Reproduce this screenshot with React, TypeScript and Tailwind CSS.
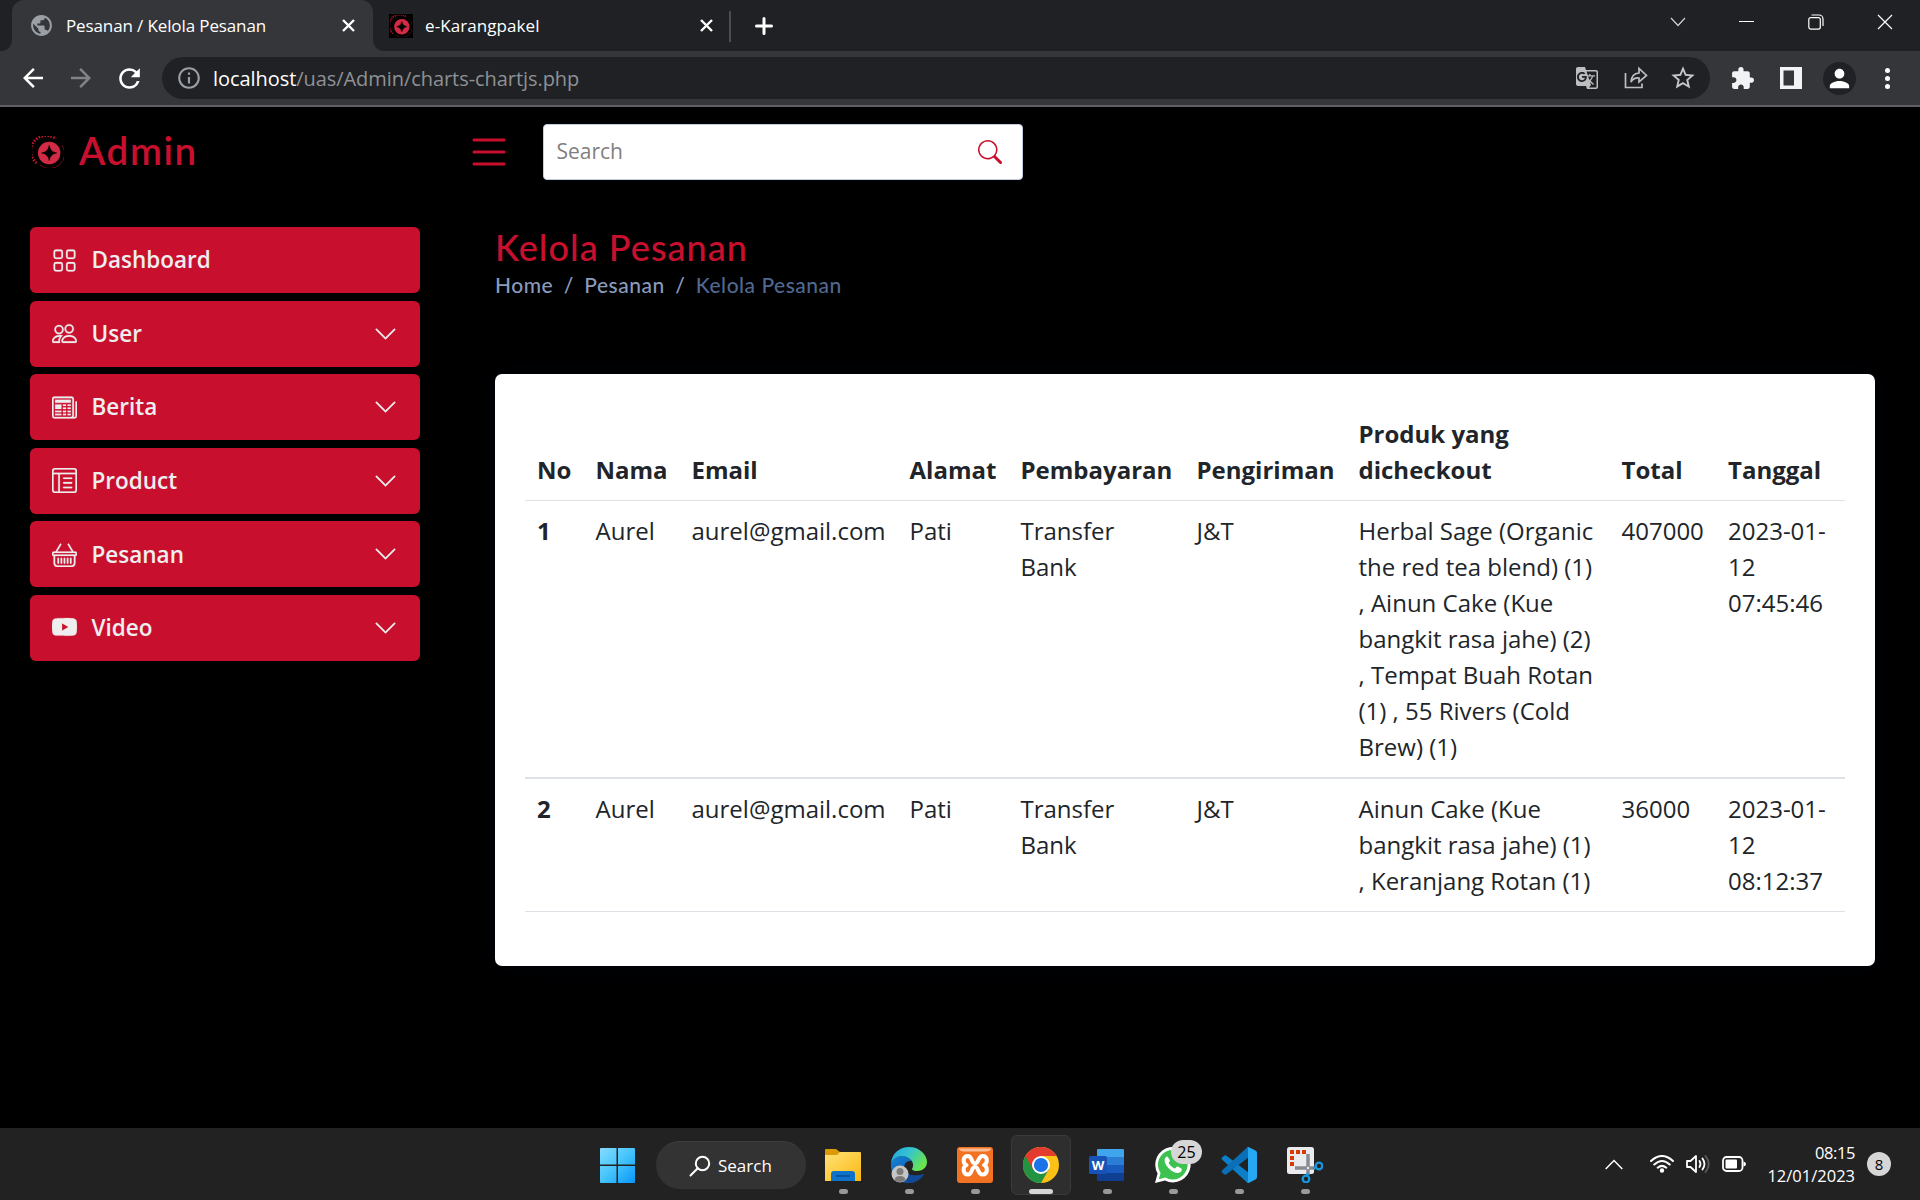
import React from 'react';
import {
  BsGrid, BsPeople, BsNewspaper, BsLayoutTextWindowReverse, BsBasket, BsYoutube,
  BsChevronDown, BsList, BsSearch,
} from 'react-icons/bs';
import {
  MdPublic, MdArrowBack, MdArrowForward, MdRefresh, MdInfoOutline, MdGTranslate,
  MdStarOutline, MdExtension, MdPerson,
} from 'react-icons/md';

const UI = "font-['Open_Sans','Noto_Sans',sans-serif]";

function BrandMark({ size }: { size: number }) {
  return (
    <svg width={size} height={size} viewBox="0 0 32 32" className="shrink-0">
      <path d="M30 9A15 15 0 0 1 8 29" fill="none" stroke="#7a1222" strokeWidth=".8" />
      <path d="M4.500 27A14.500 14.500 0 0 1 24 3" fill="none" stroke="#c0192f" strokeWidth="2.800" strokeDasharray="1.500 1.500" />
      <circle cx="17.200" cy="17" r="11.200" fill="#d22b45" />
      <path d="M17.200 9.500Q18.200 16 24.700 17Q18.200 18 17.200 24.500Q16.200 18 9.700 17Q16.200 16 17.200 9.500Z" fill="#000" stroke="#000" strokeWidth=".6" />
    </svg>
  );
}

function Cross({ size, w, color = '#fff' }: { size: number; w: number; color?: string }) {
  return (
    <svg width={size} height={size} viewBox={`0 0 ${size} ${size}`} fill="none" stroke={color} strokeWidth={w}>
      <path d={`M1 1L${size - 1} ${size - 1}M${size - 1} 1L1 ${size - 1}`} />
    </svg>
  );
}

function TabStrip() {
  return (
    <div className="flex h-[51px] bg-[#202124]">
      <div className="flex h-[51px] w-3 bg-[#35363a]"><div className="w-3 rounded-br-[11px] bg-[#202124]" /></div>
      <div className="flex h-[51px] w-[361px] bg-[#202124]">
        <div className="flex w-full items-center rounded-t-[12px] bg-[#35363a] px-[18px]">
          <MdPublic className="size-[25px] -ml-px mr-3 text-[#9aa0a6]" />
          <span className="text-[17px] tracking-[-0.12px] text-white">Pesanan / Kelola Pesanan</span>
          <span className="ml-auto"><Cross size={13} w={2.4} /></span>
        </div>
      </div>
      <div className="flex h-[51px] w-4 bg-[#35363a]"><div className="w-4 rounded-bl-[11px] bg-[#202124]" /></div>
      <div className="flex w-[342px] items-center border-r border-transparent pr-[17px]">
        <div className="flex size-6 items-center justify-center bg-black"><BrandMark size={22} /></div>
        <span className="ml-3 text-[17px] tracking-[0.080px] text-white">e-Karangpakel</span>
        <span className="ml-auto"><Cross size={13} w={2.4} /></span>
      </div>
      <div className="-ml-[2px] mt-[11px] h-[31px] w-[2px] bg-[#4b4c4f]" />
      <svg width="18" height="18" className="ml-[23.500px] mt-[17px]" stroke="#fff" strokeWidth="3" strokeLinecap="round"><path d="M9 1.500V16.500M1.500 9H16.500" /></svg>
      <div className="ml-auto flex h-[43px] items-center text-white">
        <svg width="16" height="10" className="mr-[53px]" fill="none" stroke="#d0d0d0" strokeWidth="1.200"><path d="M1 1L8 8.500L15 1" /></svg>
        <div className="mr-[54px] h-px w-[15px] bg-white" />
        <svg width="16" height="16" className="mr-[53px]" fill="none" stroke="#fff" strokeWidth="1.200"><rect x=".8" y="3.600" width="11.500" height="11.500" rx="2" /><path d="M3.500 1H11a4 4 0 0 1 4 4v7" /></svg>
        <span className="mr-[27px]"><Cross size={16} w={1.200} /></span>
      </div>
    </div>
  );
}

function Toolbar() {
  return (
    <div className="flex h-14 items-center border-b-2 border-[#5f6063] bg-[#35363a]">
      <MdArrowBack className="ml-[18px] size-[30px] text-white" />
      <MdArrowForward className="ml-[18px] size-[30px] text-[#828387]" />
      <MdRefresh className="ml-[18px] size-[31px] text-white" />
      <div className="ml-[17px] flex h-[42px] w-[1548px] items-center rounded-full bg-[#202124] pl-[14px] pr-[13px]">
        <MdInfoOutline className="size-[26px] text-[#9aa0a6]" />
        <span className="ml-[11px] pt-[2px] text-[20px] tracking-[-0.060px] text-white">localhost<span className="text-[#8e9195]">/uas/Admin/charts-chartjs.php</span></span>
        <MdGTranslate className="ml-auto size-[24px] text-[#bdbec0]" />
        <svg width="24" height="24" viewBox="0 0 24 24" className="ml-[25px]" fill="none" stroke="#bdbec0" strokeWidth="1.700"><path d="M1.500 7V21.500H18V17.500M7 16Q7.500 7.500 15 7V2.500L22.500 9.500L15 16V12Q9.500 11.500 7 16Z" /></svg>
        <MdStarOutline className="ml-[21px] size-[28px] text-[#c6c7c9]" />
      </div>
      <MdExtension className="ml-[20px] size-[25px] text-[#f1f3f4]" />
      <svg width="22" height="22" className="ml-[25px]"><path fillRule="evenodd" fill="#f1f3f4" d="M0 0H22V22H0ZM3.500 3.500V18.500H14V3.500Z" /></svg>
      <div className="ml-[21px] flex size-[33px] items-end justify-center overflow-hidden rounded-full bg-[#202124]"><MdPerson className="mb-[2px] size-[29px] text-white" /></div>
      <div className="ml-[29px] flex flex-col gap-[3px]"><i className="size-[5px] rounded-full bg-white" /><i className="size-[5px] rounded-full bg-white" /><i className="size-[5px] rounded-full bg-white" /></div>
    </div>
  );
}

const nav = [
  { label: 'Dashboard', Icon: BsGrid, open: false },
  { label: 'User', Icon: BsPeople, open: true },
  { label: 'Berita', Icon: BsNewspaper, open: true },
  { label: 'Product', Icon: BsLayoutTextWindowReverse, open: true },
  { label: 'Pesanan', Icon: BsBasket, open: true },
  { label: 'Video', Icon: BsYoutube, open: true },
];

function Sidebar() {
  return (
    <aside className="flex w-[450px] flex-col gap-[7.6px] pl-[30px] pr-[30px] pt-[30px]">
      {nav.map(({ label, Icon, open }) => (
        <a key={label} className="flex h-[66px] items-center rounded-[6px] bg-[#c8102e] pl-[22px] pr-[23px] text-[#eee]">
          <Icon className="size-[25px] stroke-[.15]" />
          <span className="ml-[14.5px] text-[22.5px] font-semibold">{label}</span>
          {open && <BsChevronDown className="ml-auto size-6 translate-x-[0.5px] stroke-[.3]" />}
        </a>
      ))}
    </aside>
  );
}

const columns = [
  { name: 'No', w: 'w-[58.500px]' }, { name: 'Nama', w: 'w-[96px]' }, { name: 'Email', w: 'w-[218px]' },
  { name: 'Alamat', w: 'w-[111px]' }, { name: 'Pembayaran', w: 'w-[176px]' }, { name: 'Pengiriman', w: 'w-[162px]' },
  { name: 'Produk yang dicheckout', w: 'w-[263px]' }, { name: 'Total', w: 'w-[106.500px]' }, { name: 'Tanggal', w: 'w-[129px]' },
];
const orders = [
  ['1', 'Aurel', 'aurel@gmail.com', 'Pati', 'Transfer Bank', 'J&T', 'Herbal Sage (Organic the red tea blend) (1) , Ainun Cake (Kue bangkit rasa jahe) (2) , Tempat Buah Rotan (1) , 55 Rivers (Cold Brew) (1)', '407000', '2023-01-12 07:45:46'],
  ['2', 'Aurel', 'aurel@gmail.com', 'Pati', 'Transfer Bank', 'J&T', 'Ainun Cake (Kue bangkit rasa jahe) (1) , Keranjang Rotan (1)', '36000', '2023-01-12 08:12:37'],
];

function Orders() {
  return (
    <div className="mt-[73px] h-[592px] w-[1380px] rounded-[7px] bg-white px-[30px] pt-[29px] shadow-[0_0_30px_#012970]/10">
      <table className="w-[1320px] table-fixed border-collapse text-left text-[24px] leading-[36px] text-[#212529]">
        <thead>
          <tr className="h-[97px] border-b border-[#dee2e6] align-bottom">
            {columns.map((c) => <th key={c.name} className={`${c.w} p-3 font-bold`}>{c.name}</th>)}
          </tr>
        </thead>
        <tbody>
          {orders.map((o, r) => (
            <tr key={o[0]} className={`${r === 0 ? 'h-[278px] border-b-2' : 'h-[133px] border-b'} border-[#dee2e6] align-top`}>
              {o.map((v, i) => <td key={i} className={`py-3 pl-3 ${i === 0 ? 'font-bold' : ''} ${i === 6 || i === 4 ? 'pr-3' : ''}`}>{v}</td>)}
            </tr>
          ))}
        </tbody>
      </table>
    </div>
  );
}

function Page() {
  return (
    <main className="flex h-[1021px] flex-col bg-black">
      <header className="flex h-[90px] items-center">
        <div className="flex w-[443px] items-center pl-[32px] text-[#c8102e]">
          <BrandMark size={32} />
          <span className="-mt-[2px] ml-[15px] font-['Lato',sans-serif] text-[38.500px] font-semibold tracking-[1.6px]">Admin</span>
        </div>
        <BsList className="ml-[22px] size-12 text-[#c8102e]" />
        <div className="ml-[30px] flex h-14 w-[480px] items-center rounded-[4px] border border-[#c5cbe0] bg-white pl-[12.500px] pr-5">
          <span className="text-[21px] text-[#7f7f7f]">Search</span>
          <BsSearch className="ml-auto size-6 text-[#c8102e]" />
        </div>
      </header>
      <div className="flex flex-1">
        <Sidebar />
        <section className="ml-[45px] pt-[29px]">
          <h1 className="h-[43px] whitespace-nowrap font-['Lato',sans-serif] text-[36px] font-medium leading-[43px] tracking-[1.050px] text-[#c8102e]">Kelola Pesanan</h1>
          <nav className="flex h-[32px] items-center gap-[10.500px] font-['Lato',sans-serif] text-[21px] font-medium tracking-[0.500px] text-[#899bbd]">
            <span>Home</span><span>/</span><span>Pesanan</span><span>/</span><span className="text-[#51678f]">Kelola Pesanan</span>
          </nav>
          <Orders />
        </section>
      </div>
    </main>
  );
}

function Explorer() {
  return (
    <svg width="36" height="34" viewBox="0 0 36 34">
      <defs><linearGradient id="folder" x2="1" y2="1"><stop stopColor="#ffe27a" /><stop offset="1" stopColor="#fbb80f" /></linearGradient></defs>
      <path d="M0 2Q0 1 1 1H11L15 4H35V12H0Z" fill="#dd9a08" />
      <path d="M0 7H12L15 4H35Q36 4 36 5V33H0Z" fill="url(#folder)" />
      <path d="M6 33V26Q6 23 9 23H27Q30 23 30 26V33Z" fill="#0e72c8" /><path d="M11 28H25" stroke="#074b91" strokeWidth="1.500" />
    </svg>
  );
}

function Edge() {
  return (
    <svg width="36" height="36" viewBox="0 0 36 36">
      <defs>
        <linearGradient id="edgeTop" x2="1" y2=".5"><stop stopColor="#21a5e0" /><stop offset=".5" stopColor="#35c3d0" /><stop offset="1" stopColor="#68e54e" /></linearGradient>
        <linearGradient id="edgeLow" x2="1" y2="1"><stop stopColor="#1483d8" /><stop offset="1" stopColor="#0c4da0" /></linearGradient>
      </defs>
      <path d="M0 16Q4 9 11 9Q19 9 20 14Q14 13 13 20C13 27 22 31 33 27C29 34 22 36.500 16 36C7 35-1 28 0 16Z" fill="url(#edgeLow)" />
      <path d="M0 16C1 6 9 0 18 0C29 0 36 8 36 15C36 21 31 24 26 24C22 24 20 22.500 21.500 21C24 16 19 9 11 9Q4 9 0 16Z" fill="url(#edgeTop)" />
      <path d="M13 20C13 27 22 31 33 27C29 34 22 36.500 16 36C12 32 10 25 13 20Z" fill="#114a96" />
      <circle cx="9" cy="27" r="8.500" fill="#c8c6c4" /><circle cx="9" cy="24.500" r="3.500" fill="#7d7b79" /><path d="M3.500 33Q4 29 9 29T14.500 33Q9 37 3.500 33Z" fill="#7d7b79" />
    </svg>
  );
}

function Xampp() {
  return (
    <svg width="36" height="36" viewBox="0 0 36 36">
      <rect width="36" height="36" rx="3" fill="#f27222" /><path d="M1.500 1.500H34.500Q33 4.500 29 4.500H7Q3 4.500 1.500 1.500Z" fill="#f9bd95" />
      <path d="M11 9C5.500 9 5.500 16.500 9.500 18C5.500 19.500 5.500 27.500 11 27.500C15.500 27.500 14 20 18 20S20.500 27.500 25.500 27.500C31 27.500 31 19.500 27 18C31 16.500 31 9 25.500 9C21 9 22 16.500 18 16.500S15.500 9 11 9Z" fill="none" stroke="#fff" strokeWidth="4" strokeLinejoin="round" />
    </svg>
  );
}

function Chrome() {
  return (
    <svg width="36" height="36" viewBox="0 0 36 36">
      <circle cx="18" cy="18" r="18" fill="#fbc116" />
      <path d="M18 18L25.800 22.500L18 36A18 18 0 0 1 2.400 9Z" fill="#229342" />
      <path d="M2.400 9A18 18 0 0 1 33.600 9H18L10.200 22.500Z" fill="#e33b2e" />
      <circle cx="18" cy="18" r="9" fill="#fff" /><circle cx="18" cy="18" r="7.100" fill="#1a73e8" />
    </svg>
  );
}

function Word() {
  return (
    <div className="relative">
      <svg width="36" height="32" viewBox="0 0 36 32">
        <path d="M9 0H34Q35 0 35 1V8H8V1Q8 0 9 0Z" fill="#41a5ee" /><path d="M8 8H35V16H8Z" fill="#2b7cd3" /><path d="M8 16H35V24H8Z" fill="#185abd" /><path d="M8 24H35V31Q35 32 34 32H9Q8 32 8 31Z" fill="#103f91" />
        <rect y="7" width="18" height="18" rx="1.500" fill="#1752b8" />
      </svg>
      <span className="absolute left-0 top-[7px] w-[18px] text-center text-[13px] font-bold leading-[18px] text-white">W</span>
    </div>
  );
}

function WhatsApp() {
  return (
    <div className="relative">
      <svg width="36" height="36" viewBox="0 0 36 36">
        <path d="M0 36L2.600 26.500A17.700 17.700 0 1 1 10 33.500Z" fill="#fff" />
        <path d="M3.800 32.200L5.600 26A14.800 14.800 0 1 1 10.500 30.500Z" fill="#3dc250" />
        <path d="M12.500 9.500Q11.500 9 10.500 10.500C8 14 11 18.500 14.500 22C19 26 24 27.500 26.500 24Q27.500 22 26 21.200L22.800 19.600Q21.800 19.200 21 20.500Q20 22 18.500 21Q15.500 19.300 14 16.500Q13.500 15.500 14.500 14.800Q15.300 14 14.800 13Z" fill="#fff" />
      </svg>
      <span className="absolute -top-[7px] left-4 flex h-6 w-[31px] items-center justify-center rounded-full bg-[#d6d6d6] text-[16px] text-black">25</span>
    </div>
  );
}

function VSCode() {
  return (
    <svg width="36" height="36" viewBox="0 0 36 36">
      <path d="M1 12.500Q0 11.500 1 10.500L3.500 8.500Q4.500 8 5.500 8.700L28 26V36Q26.500 36 25 34.500Z" fill="#0d7fc9" />
      <path d="M1 23.500Q0 24.500 1 25.500L3.500 27.500Q4.500 28 5.500 27.300L28 10V0Q26.500 0 25 1.500Z" fill="#0a6fb6" />
      <path d="M26 .5Q27 0 28 .3L34.500 3.500Q36 4.300 36 6V30Q36 31.700 34.500 32.500L28 35.700Q27 36 26 35.500Q27 35 27 33.500V2.500Q27 1 26 .5Z" fill="#27a8f2" />
    </svg>
  );
}

function Snip() {
  return (
    <svg width="36" height="36" viewBox="0 0 36 36">
      <rect width="27" height="27" rx="2.500" fill="#e9ebef" />
      <g fill="#d83b01"><path d="M3 3H7V7H3ZM9 3H13V7H9ZM15 3H19V7H15ZM3 9H7V13H3ZM3 15H7V19H3Z" /></g>
      <path d="M21 7V28M8 21H28" stroke="#888c92" strokeWidth="3.500" /><circle cx="21" cy="21" r="1.200" fill="#eee" />
      <g fill="none" stroke="#1795dd" strokeWidth="2.300"><circle cx="32" cy="19" r="3.300" /><circle cx="19" cy="32" r="3.300" /><path d="M26 21.500L29 20.500M21 26L20 29" /></g>
    </svg>
  );
}

const apps = [Explorer, Edge, Xampp, Chrome, Word, WhatsApp, VSCode, Snip];

function Taskbar() {
  return (
    <footer className="flex h-[72px] bg-[#222222] text-white">
      <div className="flex w-[650px] items-center justify-end pr-[15px] pt-[2px]">
        <svg width="35" height="35" viewBox="0 0 35 35">
          <defs><linearGradient id="win" gradientUnits="userSpaceOnUse" x1="0" y1="0" x2="35" y2="35"><stop stopColor="#84dcff" /><stop offset=".5" stopColor="#45c4fb" /><stop offset="1" stopColor="#0797fb" /></linearGradient></defs>
          <path fill="url(#win)" d="M1 0H16.500V16.500H0V1Q0 0 1 0ZM18 0H34Q35 0 35 1V16.500H18ZM0 18H16.500V35H1Q0 35 0 34ZM18 18H35V34Q35 35 34 35H18Z" />
        </svg>
      </div>
      <div className="ml-[6px] mt-[13px] flex h-12 w-[150px] items-center rounded-full border-t border-[#3e3e3e] bg-[#333333] pl-[33px]">
        <svg width="22" height="22" viewBox="0 0 22 22" fill="none" stroke="#fff" strokeWidth="2"><circle cx="13.500" cy="8.500" r="6.700" /><path d="M8.700 13.300L1.500 20.500" strokeLinecap="round" /></svg>
        <span className="ml-[7px] text-[17px]">Search</span>
      </div>
      <div className="ml-[4px] flex">
        {apps.map((App, i) => (
          <div key={i} className="flex w-[66px] justify-center">
            <div className={`mt-[7px] flex h-[60px] w-[60px] flex-col items-center rounded-[6px] ${i === 3 ? 'border border-[#3a3a3a] bg-[#2e2e2e]' : 'border border-transparent'}`}>
              <div className="mt-[10px] flex h-[38px] items-center"><App /></div>
              <div className={`mt-[5px] h-[5px] rounded-full ${i === 3 ? 'w-6 bg-[#d6d6d6]' : 'w-[9px] bg-[#999]'}`} />
            </div>
          </div>
        ))}
      </div>
      <div className="ml-auto flex items-center pr-[29px]">
        <svg width="18" height="11" className="mr-[27px]" fill="none" stroke="#fff" strokeWidth="1.500"><path d="M.7 10L9 1.500L17.300 10" /></svg>
        <svg width="24" height="18" viewBox="0 0 24 18" className="mr-3" fill="none" stroke="#fff" strokeWidth="2" strokeLinecap="round"><path d="M1 6Q12-4 23 6M4.300 9.500Q12 2.500 19.700 9.500M7.700 12.700Q12 9 16.300 12.700" /><circle cx="12" cy="15.500" r="1.200" fill="#fff" /></svg>
        <svg width="24" height="20" viewBox="0 0 24 20" className="mr-3" fill="none" stroke="#fff" strokeWidth="1.800" strokeLinejoin="round" strokeLinecap="round"><path d="M1 7H4.500L10 2V18L4.500 13H1ZM13.500 7Q15.500 10 13.500 13M16.500 4.500Q20.500 10 16.500 15.500" /><path d="M19.500 2Q26 10 19.500 18" stroke="#5c5c5c" /></svg>
        <svg width="24" height="16" viewBox="0 0 24 16" className="mr-[21px]"><rect x="1" y="1" width="19.500" height="14" rx="3.500" fill="none" stroke="#fff" strokeWidth="1.800" /><rect x="3.500" y="3.500" width="11.500" height="9" rx="1" fill="#fff" /><path d="M21.500 5.500Q24 6 24 8T21.500 10.500Z" fill="#fff" /></svg>
        <div className="w-[88px] text-right text-[16.500px] leading-[23px]"><div className="tracking-[-0.4px]">08:15</div><div>12/01/2023</div></div>
        <div className="ml-[12px] flex size-6 items-center justify-center rounded-full bg-[#d6d6d6] text-[15px] text-black">8</div>
      </div>
    </footer>
  );
}

export default function App() {
  return (
    <div className={`h-[1200px] w-[1920px] overflow-hidden bg-black ${UI}`}>
      <TabStrip />
      <Toolbar />
      <Page />
      <Taskbar />
    </div>
  );
}
